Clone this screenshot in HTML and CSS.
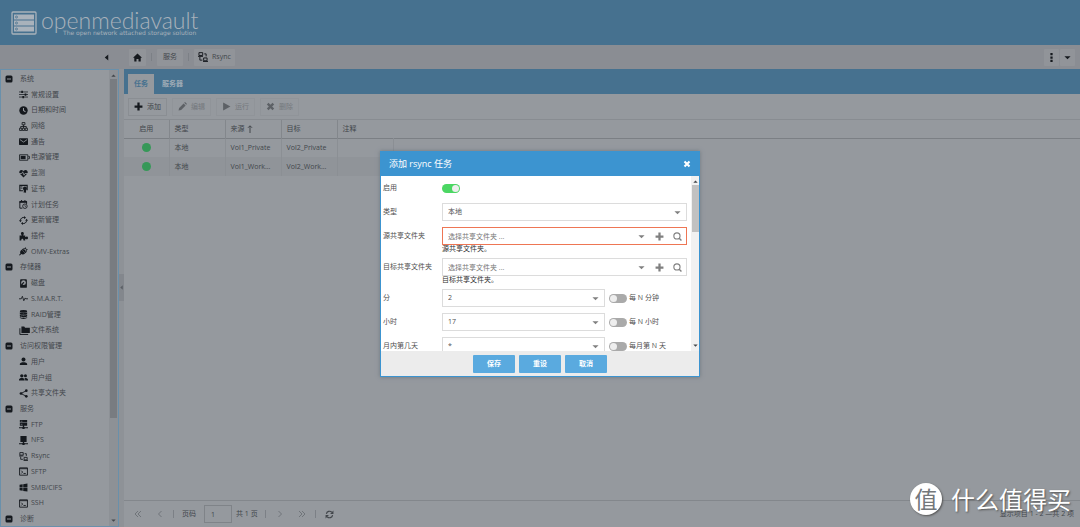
FILE: index.html
```
<!DOCTYPE html>
<html lang="zh-CN">
<head>
<meta charset="utf-8">
<title>openmediavault</title>
<link rel="stylesheet" href="styles.css">
</head>
<body>
<svg class="sprite" aria-hidden="true">
  <symbol id="minus-box" viewBox="0 0 16 16"><rect x="1" y="1" width="14" height="14" rx="3"/><path d="M4 8h8" stroke="#95999e" stroke-width="2"/></symbol>
  <symbol id="sliders" viewBox="0 0 16 16"><path d="M0 3.500h16M0 8h16M0 12.500h16" stroke="currentColor" stroke-width="1.300"/><path d="M4 1.500h3v4H4zM10 6h3v4h-3zM6 10.500h3v4H6z"/></symbol>
  <symbol id="clock" viewBox="0 0 16 16"><circle cx="8" cy="8" r="7.500"/><path d="M8 3.500V8l3.500 2.500" fill="none" stroke="#95999e" stroke-width="1.800"/></symbol>
  <symbol id="network" viewBox="0 0 16 16"><path d="M5.500 1h5v4h-5zM1 11h4v4H1zM6 11h4v4H6zM11 11h4v4h-4zM8 5v6M3 11V8h10v3" fill="none" stroke="currentColor" stroke-width="1.500"/></symbol>
  <symbol id="mail" viewBox="0 0 16 16"><rect y="2" width="16" height="12" rx="1"/><path d="M1.500 4.500 8 9l6.500-4.500" fill="none" stroke="#95999e" stroke-width="1.500"/></symbol>
  <symbol id="battery" viewBox="0 0 20 16"><path d="M1 3h15v10H1zM17 6h2v4h-2" fill="none" stroke="currentColor" stroke-width="1.500"/><path d="M3 5h9v6H3z"/></symbol>
  <symbol id="heart" viewBox="0 0 16 16"><path d="M8 15 1 8C-1 4 3-1 8 3.500 13-1 17 4 15 8z"/><path d="M0 8h5l1.500-3 2.500 6 1.500-3H16" fill="none" stroke="#95999e" stroke-width="1.400"/></symbol>
  <symbol id="cert" viewBox="0 0 16 16"><path d="M7 12H1.500V2.500h13V11" fill="none" stroke="currentColor" stroke-width="2"/><path d="M3 5h3M3 7.500h3" stroke="currentColor" stroke-width="1.300"/><circle cx="10.500" cy="8" r="3.500"/><path d="M8.500 10v6l2-1.500 2 1.500v-6z"/></symbol>
  <symbol id="schedule" viewBox="0 0 16 16"><path d="M6 14.500H1.500v-12h12V7M4.500 0v3M10.500 0v3" fill="none" stroke="currentColor" stroke-width="1.700"/><path d="M1 2h13v3H1z"/><circle cx="10.500" cy="11" r="4" fill="none" stroke="currentColor" stroke-width="1.500"/><path d="M10.500 8.500V11l2 1" fill="none" stroke="currentColor"/></symbol>
  <symbol id="refresh" viewBox="0 0 16 16"><path d="M2.500 7A5.500 5.500 0 0 1 12 4M13.500 9A5.500 5.500 0 0 1 4 12" fill="none" stroke="currentColor" stroke-width="2"/><path d="M15 1v6H9zM1 15V9h6z"/></symbol>
  <symbol id="sync" viewBox="0 0 16 16"><path d="M2.500 8A5.500 5.500 0 0 1 10 2.900M13.500 8A5.500 5.500 0 0 1 6 13.100" fill="none" stroke="currentColor" stroke-width="1.700"/><path d="M9 0v5.500l3.500-2.500zM7 16v-5.500L3.500 13zM0 7.500h5L2.500 11zM16 8.500h-5L13.500 5z"/></symbol>
  <symbol id="puzzle" viewBox="0 0 16 16"><path d="M1 6h4C2 2 4 0 6 0s4 2 1.500 6H11v3c3-2 5-1 5 1.500S14 14 11 12v3H8c0-4-4-4-4 0H1z"/></symbol>
  <symbol id="plug" viewBox="0 0 16 16"><path d="M5 5l6 6c-2 2.500-5 3-7 1.500L1.500 15 0 14l2.500-2.500C1.500 9 2 7 5 5z"/><path d="M5 4.500 11.500 11 14 8 8 2zM8 4l3.500-3.500L13 2 9.500 5.500zM10.500 6.500 14 3l1.500 1.500L12 8z"/></symbol>
  <symbol id="disk" viewBox="0 0 16 16"><path d="M3.500.5h9A1.500 1.500 0 0 1 14 2v12a1.500 1.500 0 0 1-1.500 1.500h-9A1.500 1.500 0 0 1 2 14V2A1.500 1.500 0 0 1 3.500.5z"/><circle cx="8" cy="6.500" r="4.300" fill="#95999e"/><circle cx="8" cy="6.500" r="1.300"/><path d="m7 7-3 6" stroke="currentColor" stroke-width="2"/></symbol>
  <symbol id="pulse" viewBox="0 0 16 16"><path d="M0 8.500h4L6 4l2.500 8L11 7l1 1.500h4" fill="none" stroke="currentColor" stroke-width="1.500"/></symbol>
  <symbol id="database" viewBox="0 0 16 16"><ellipse cx="8" cy="2.500" rx="6.500" ry="2.500"/><path d="M1.500 4c2 2.200 11 2.200 13 0v3c-2 2.200-11 2.200-13 0zM1.500 8.200c2 2.200 11 2.200 13 0v3c-2 2.200-11 2.200-13 0zM1.500 12.300c2 2.200 11 2.200 13 0v1.200c0 3.300-13 3.300-13 0z"/></symbol>
  <symbol id="folders" viewBox="0 0 19 16"><path d="M4 1h5l1.500 2H19v9.500H4z"/><path d="M1.300 4v11H16" fill="none" stroke="currentColor" stroke-width="1.700"/></symbol>
  <symbol id="user" viewBox="0 0 16 16"><circle cx="8" cy="4.500" r="3.500"/><path d="M1.500 14v-1.500c0-4.500 13-4.500 13 0V14z"/></symbol>
  <symbol id="users" viewBox="0 0 16 16"><circle cx="5" cy="5" r="3"/><circle cx="11.500" cy="5" r="2.700"/><path d="M0 13.500V12c0-4 10-4 10 0v1.500zM11 13.500V12c0-1.300-.6-2.200-1.500-3C12 8.500 16 9.500 16 12v1.500z"/></symbol>
  <symbol id="share" viewBox="0 0 16 16"><path d="M13 3 3.500 8l9.500 5" fill="none" stroke="currentColor" stroke-width="1.600"/><circle cx="13" cy="3" r="2.400"/><circle cx="3.500" cy="8" r="2.400"/><circle cx="13" cy="13" r="2.400"/></symbol>
  <symbol id="server" viewBox="0 0 16 16"><path d="M1.500 0h13v4.500h-13zM1.500 5.500h13V10h-13zM7 10h2v3H7zM0 13h16v1.500H0zM6 12h4v4H6z"/><path d="M3 2.200h3M3 7.700h3" stroke="#95999e"/></symbol>
  <symbol id="nfs" viewBox="0 0 16 16"><path d="M2.500 0h11v10.500h-11zM7 10h2v3H7zM0 13h16v1.500H0zM6 12h4v4H6z"/></symbol>
  <symbol id="rsync" viewBox="0 0 16 16"><path d="M1.500 1h6v4.500h-6zM9 9.500h5.500V14H9zM0 7h8M8 15.300h8M3 8v5h4M10 3h3v4" fill="none" stroke="currentColor" stroke-width="1.500"/></symbol>
  <symbol id="terminal" viewBox="0 0 16 16"><path d="M1 1.500h14v13H1zM1 3h14M4 6.500 6.500 9 4 11.500M8 11.500h4" fill="none" stroke="currentColor" stroke-width="1.600"/></symbol>
  <symbol id="windows" viewBox="0 0 16 16"><path d="M1 3l5.500-.8v5.300H1zM7.500 2 15 1v6.500H7.500zM1 8.500h5.500v5.300L1 13zM7.500 8.500H15V15l-7.500-1z"/></symbol>
  <symbol id="home" viewBox="0 0 16 16"><path d="M8 1 16 8.500h-2.300V15H9.800v-4.500H6.200V15H2.300V8.500H0z"/></symbol>
  <symbol id="plus" viewBox="0 0 16 16"><path d="M6 1h4v5h5v4h-5v5H6v-5H1V6h5z"/></symbol>
  <symbol id="pencil" viewBox="0 0 16 16"><path d="M1 15l1-4.500 8-8L13.500 6l-8 8zM11 1.500 12.500 0 16 3.500 14.500 5z"/></symbol>
  <symbol id="play" viewBox="0 0 16 16"><path d="M2 1 15 8 2 15z"/></symbol>
  <symbol id="cross" viewBox="0 0 16 16"><path d="m3 3 10 10M13 3 3 13" stroke="currentColor" stroke-width="4.200"/></symbol>
  <symbol id="search" viewBox="0 0 16 16"><circle cx="7" cy="7" r="5.500" fill="none" stroke="currentColor" stroke-width="2"/><path d="m11 11 4 4" stroke="currentColor" stroke-width="2.500"/></symbol>
  <symbol id="down" viewBox="0 0 16 16"><path d="M1 5h14l-7 7z"/></symbol>
  <symbol id="up" viewBox="0 0 16 16"><path d="M1 12h14L8 5z"/></symbol>
  <symbol id="left" viewBox="0 0 16 16"><path d="M12 1v14L4 8z"/></symbol>
  <symbol id="dots" viewBox="0 0 16 16"><path d="M6 0h4v4H6zM6 6h4v4H6zM6 12h4v4H6z"/></symbol>
  <symbol id="prev" viewBox="0 0 16 16"><path d="m11 2-6 6 6 6" fill="none" stroke="currentColor" stroke-width="1.800"/></symbol>
  <symbol id="next" viewBox="0 0 16 16"><path d="m5 2 6 6-6 6" fill="none" stroke="currentColor" stroke-width="1.800"/></symbol>
  <symbol id="first" viewBox="0 0 16 16"><path d="M8 2 2 8l6 6M14 2 8 8l6 6" fill="none" stroke="currentColor" stroke-width="1.800"/></symbol>
  <symbol id="last" viewBox="0 0 16 16"><path d="m2 2 6 6-6 6M8 2l6 6-6 6" fill="none" stroke="currentColor" stroke-width="1.800"/></symbol>
  <symbol id="sort" viewBox="0 0 16 16"><path d="M8 16V2M4 5.500 8 1.500l4 4" fill="none" stroke="currentColor" stroke-width="2"/></symbol>
</svg>

<div class="app">
  <header class="brand">
    <svg class="brand-mark" viewBox="0 0 26 24" aria-hidden="true"><rect x="1" y="1" width="24" height="22" rx="1" fill="none" stroke="#a9b2bb" stroke-width="1.300"/><path d="M3 3.500h20v5H3zM3 9.500h20v5H3zM3 15.500h20v5H3z" fill="#a9b2bb"/><g fill="none" stroke="#46718f" stroke-width=".8"><circle cx="5.500" cy="6" r="1"/><circle cx="5.500" cy="12" r="1"/><circle cx="5.500" cy="18" r="1"/></g></svg>
    <div class="brand-text"><span class="brand-name">openmediavault</span><span class="brand-tag">The open network attached storage solution</span></div>
  </header>

  <div class="topbar">
    <button class="collapse" aria-label="折叠"><svg class="icon tiny"><use href="#left"/></svg></button>
    <nav class="crumbs" aria-label="路径">
      <button class="chip" aria-label="主页"><svg class="icon"><use href="#home"/></svg></button><i></i>
      <button class="chip">服务</button><i></i>
      <button class="chip"><svg class="icon big"><use href="#rsync"/></svg>Rsync</button>
    </nav>
    <div class="menu-buttons"><button class="chip" aria-label="菜单"><svg class="icon"><use href="#dots"/></svg></button><button class="chip" aria-label="更多"><svg class="icon tiny"><use href="#down"/></svg></button></div>
  </div>

  <div class="content">
    <aside class="sidebar">
      <nav class="tree">
        <a class="group" href="#"><svg class="icon"><use href="#minus-box"/></svg>系统</a>
        <a href="#"><svg class="icon"><use href="#sliders"/></svg>常规设置</a>
        <a href="#"><svg class="icon"><use href="#clock"/></svg>日期和时间</a>
        <a href="#"><svg class="icon"><use href="#network"/></svg>网络</a>
        <a href="#"><svg class="icon"><use href="#mail"/></svg>通告</a>
        <a href="#"><svg class="icon wide"><use href="#battery"/></svg>电源管理</a>
        <a href="#"><svg class="icon"><use href="#heart"/></svg>监测</a>
        <a href="#"><svg class="icon"><use href="#cert"/></svg>证书</a>
        <a href="#"><svg class="icon"><use href="#schedule"/></svg>计划任务</a>
        <a href="#"><svg class="icon"><use href="#sync"/></svg>更新管理</a>
        <a href="#"><svg class="icon"><use href="#puzzle"/></svg>插件</a>
        <a href="#"><svg class="icon"><use href="#plug"/></svg>OMV-Extras</a>
        <a class="group" href="#"><svg class="icon"><use href="#minus-box"/></svg>存储器</a>
        <a href="#"><svg class="icon"><use href="#disk"/></svg>磁盘</a>
        <a href="#"><svg class="icon"><use href="#pulse"/></svg>S.M.A.R.T.</a>
        <a href="#"><svg class="icon"><use href="#database"/></svg>RAID管理</a>
        <a href="#"><svg class="icon wide"><use href="#folders"/></svg>文件系统</a>
        <a class="group" href="#"><svg class="icon"><use href="#minus-box"/></svg>访问权限管理</a>
        <a href="#"><svg class="icon"><use href="#user"/></svg>用户</a>
        <a href="#"><svg class="icon"><use href="#users"/></svg>用户组</a>
        <a href="#"><svg class="icon"><use href="#share"/></svg>共享文件夹</a>
        <a class="group" href="#"><svg class="icon"><use href="#minus-box"/></svg>服务</a>
        <a href="#"><svg class="icon"><use href="#server"/></svg>FTP</a>
        <a href="#"><svg class="icon"><use href="#nfs"/></svg>NFS</a>
        <a href="#"><svg class="icon"><use href="#rsync"/></svg>Rsync</a>
        <a href="#"><svg class="icon"><use href="#terminal"/></svg>SFTP</a>
        <a href="#"><svg class="icon"><use href="#windows"/></svg>SMB/CIFS</a>
        <a href="#"><svg class="icon"><use href="#terminal"/></svg>SSH</a>
        <a class="group" href="#"><svg class="icon"><use href="#minus-box"/></svg>诊断</a>
      </nav>
      <div class="scroll"><svg><use href="#up"/></svg><span class="thumb"></span><svg><use href="#down"/></svg></div>
    </aside>
    <div class="splitter"><button aria-label="收起侧栏"><svg class="icon tiny"><use href="#left"/></svg></button></div>

    <main class="panel">
      <div class="tabs" role="tablist"><button class="tab active" role="tab" aria-selected="true">任务</button><button class="tab" role="tab">服务器</button></div>
      <div class="tools">
        <button class="tool on"><svg class="icon"><use href="#plus"/></svg>添加</button>
        <button class="tool" disabled><svg class="icon"><use href="#pencil"/></svg>编辑</button>
        <button class="tool" disabled><svg class="icon"><use href="#play"/></svg>运行</button>
        <button class="tool" disabled><svg class="icon"><use href="#cross"/></svg>删除</button>
      </div>
      <div class="grid">
        <table>
          <thead><tr><th>启用</th><th>类型</th><th>来源 <svg class="icon sort"><use href="#sort"/></svg></th><th>目标</th><th>注释</th><th></th></tr></thead>
          <tbody>
            <tr><td><span class="dot"></span></td><td>本地</td><td>Vol1_Private</td><td>Vol2_Private</td><td></td><td></td></tr>
            <tr><td><span class="dot"></span></td><td>本地</td><td>Vol1_Work...</td><td>Vol2_Work...</td><td></td><td></td></tr>
          </tbody>
        </table>
      </div>
      <footer class="pager">
        <button aria-label="首页"><svg class="icon"><use href="#first"/></svg></button>
        <button aria-label="上一页"><svg class="icon"><use href="#prev"/></svg></button><i></i>
        <label for="page">页码</label><input id="page" value="1"><span>共 1 页</span><i></i>
        <button aria-label="下一页"><svg class="icon"><use href="#next"/></svg></button>
        <button aria-label="末页"><svg class="icon"><use href="#last"/></svg></button><i></i>
        <button class="reload" aria-label="刷新"><svg class="icon"><use href="#refresh"/></svg></button>
        <span class="status">显示项目 1 - 2 —共 2 项</span>
      </footer>
    </main>
  </div>
</div>

<div class="dialog" role="dialog" aria-labelledby="dlg-title">
  <div class="dialog-head"><h2 id="dlg-title">添加 rsync 任务</h2><button aria-label="关闭"><svg class="icon"><use href="#cross"/></svg></button></div>
  <div class="dialog-body">
    <form class="form">
      <div class="row"><label for="enable">启用</label><div class="line"><input class="switch" type="checkbox" id="enable" checked></div></div>
      <div class="row"><label for="type">类型</label><div class="box"><select id="type"><option>本地</option></select><svg class="icon arrow"><use href="#down"/></svg></div></div>
      <div class="row hinted"><label for="src">源共享文件夹</label><div class="box invalid"><input id="src" placeholder="选择共享文件夹 ..."><button type="button" aria-label="展开"><svg class="icon tiny"><use href="#down"/></svg></button><button type="button" aria-label="新建"><svg class="icon"><use href="#plus"/></svg></button><button type="button" aria-label="搜索"><svg class="icon"><use href="#search"/></svg></button></div><small>源共享文件夹。</small></div>
      <div class="row hinted"><label for="dst">目标共享文件夹</label><div class="box"><input id="dst" placeholder="选择共享文件夹 ..."><button type="button" aria-label="展开"><svg class="icon tiny"><use href="#down"/></svg></button><button type="button" aria-label="新建"><svg class="icon"><use href="#plus"/></svg></button><button type="button" aria-label="搜索"><svg class="icon"><use href="#search"/></svg></button></div><small>目标共享文件夹。</small></div>
      <div class="row"><label for="min">分</label><div class="line"><div class="box"><select id="min"><option>2</option></select><svg class="icon arrow"><use href="#down"/></svg></div><label class="every"><input class="switch" type="checkbox">每 N 分钟</label></div></div>
      <div class="row"><label for="hour">小时</label><div class="line"><div class="box"><select id="hour"><option>17</option></select><svg class="icon arrow"><use href="#down"/></svg></div><label class="every"><input class="switch" type="checkbox">每 N 小时</label></div></div>
      <div class="row"><label for="day">月内第几天</label><div class="line"><div class="box"><select id="day"><option>*</option></select><svg class="icon arrow"><use href="#down"/></svg></div><label class="every"><input class="switch" type="checkbox">每月第 N 天</label></div></div>
    </form>
    <div class="scroll"><svg><use href="#up"/></svg><span class="thumb"></span><svg><use href="#down"/></svg></div>
  </div>
  <div class="dialog-foot"><button>保存</button><button>重设</button><button>取消</button></div>
</div>

<div class="watermark"><span class="seal">值</span><span>什么值得买</span></div>
</body>
</html>
```
FILE: styles.css
```
* { box-sizing: border-box; }
body {
  margin: 0;
  font: 7px/10px "Open Sans", "Noto Sans CJK SC", sans-serif;
  color: #42464b;
  background: #95999e;
  overflow: hidden;
}
button, input, select { font: inherit; color: inherit; border: 0; padding: 0; margin: 0; background: none; outline: 0; }
button { display: flex; align-items: center; justify-content: center; }
a { color: inherit; text-decoration: none; }
.sprite { position: absolute; width: 0; height: 0; }
.icon { width: 9px; height: 9px; fill: currentColor; color: #15191e; flex: none; }
.icon.tiny { width: 7px; height: 7px; }
.icon.big { width: 10px; height: 10px; }

.app { display: flex; flex-direction: column; height: 100vh; }
.brand { display: flex; align-items: center; gap: 4px; height: 45px; padding: 0 11px; background: #46718f; color: #a9b2bb; flex: none; }
.brand-mark { width: 26px; height: 24px; }
.brand-text { display: flex; flex-direction: column; }
.brand-name { font: 300 23px/20px Lato, sans-serif; }
.brand-tag { font: 6px/6px "DejaVu Sans", sans-serif; padding-left: 22px; }

.topbar { display: flex; align-items: center; height: 24px; background: #8a8d93; flex: none; }
.collapse { width: 24px; height: 16px; margin-left: 94px; }
.crumbs { display: flex; align-items: center; gap: 5px; margin-left: 11px; }
.crumbs i, .pager i { width: 1px; height: 8px; background: #7c8086; }
.chip { height: 17px; gap: 4px; background: #919499; border-radius: 1px; }
.crumbs .chip { padding: 0 4px; }
.crumbs .chip:nth-of-type(2) { padding: 0 6px; }
.menu-buttons { display: flex; gap: 1px; margin-left: auto; padding-right: 5px; }
.menu-buttons .chip { width: 15px; }

.content { display: flex; flex: 1; min-height: 0; }
.sidebar { display: flex; width: 119px; border: 1px solid #6990ab; flex: none; }
.tree { display: flex; flex-direction: column; flex: 1; min-width: 0; padding-top: 1px; margin-bottom: -1px; }
.tree a { display: flex; flex: 1; align-items: center; gap: 3px; padding-left: 18px; white-space: nowrap; min-height: 0; }
.tree .group { gap: 7px; padding-left: 4px; }
.tree .group .icon { width: 8px; height: 8px; }
.tree .icon.wide { width: 11px; margin-right: -2px; }
.scroll { display: flex; flex-direction: column; align-items: center; width: 9px; padding: 2px 1px; background: #8d9196; flex: none; }
.scroll svg { width: 5px; height: 7px; fill: #42464b; flex: none; }
.thumb { width: 7px; background: #787c81; }
.sidebar .thumb { height: 75%; }
.scroll svg:last-child { margin-top: auto; }
.splitter { display: flex; align-items: center; width: 5px; background: #8e9297; flex: none; }
.splitter button { width: 5px; height: 27px; background: #83878d; margin-top: -22px; }
.splitter .icon { width: 5px; color: #5a5e64; }

.panel { display: flex; flex-direction: column; flex: 1; min-width: 0; }
.tabs { display: flex; align-items: flex-end; height: 25px; padding-left: 4px; background: #46718f; flex: none; }
.tab { height: 20px; padding: 0 6px; color: #9fabb6; font-weight: 600; }
.tab + .tab { padding: 0 8px; }
.tab.active { background: #95999e; color: #46718f; }
.tools { display: flex; align-items: center; gap: 5px; height: 25px; padding-left: 4px; flex: none; }
.tool { width: 39px; height: 18px; gap: 4px; border: 1px solid #909499; color: #74787d; }
.tool .icon { color: #5d6166; }
.tool.on { color: #42464b; border-color: #8a8e93; }
.tool.on .icon { color: #15191e; }
.grid { flex: 1; border-top: 1px solid #888c91; }
table { width: 100%; border-collapse: collapse; table-layout: fixed; }
th, td { width: 56px; height: 19px; padding: 0 5px; text-align: left; font-weight: 400; border-right: 1px solid #8b8f94; white-space: nowrap; }
th { height: 18px; border-right-color: #83878c; }
th:last-child, td:last-child { width: auto; border-right: 0; }
th:first-child, td:first-child { width: 45px; text-align: center; }
thead tr { border-bottom: 1px solid #7b7f84; }
th:nth-child(5) { border-right: 0; }
tbody tr:nth-child(2) td:not(:last-child) { background: #909499; }
.icon.sort { width: 8px; height: 8px; vertical-align: middle; color: #42464b; }
.dot { display: block; width: 9px; height: 9px; margin: 0 auto; border-radius: 50%; background: #369858; }

.pager { display: flex; align-items: center; height: 27px; padding: 0 6px 0 8px; border-top: 1px solid #83878c; flex: none; }
.pager button { width: 12px; height: 16px; margin-right: 10px; }
.pager .icon { color: #6b6f75; width: 8px; height: 8px; }
.pager i { margin: 0 8px 0 -3px; }
.pager input { width: 28px; height: 18px; padding: 0 6px; margin: 0 4px 0 8px; border: 1px solid #7f8388; }
.pager span + i { margin-left: 7px; }
.pager .reload .icon { color: #42464b; width: 9px; height: 9px; }
.status { margin-left: auto; }

.dialog {
  position: absolute; left: 50%; top: 151px; width: 320px; margin-left: -160px;
  display: flex; flex-direction: column;
  background: #fff; border: 1px solid #3c94d0; color: #505050;
  box-shadow: 0 0 4px #6f7982;
}
.dialog .icon { color: #808080; }
.dialog-head { display: flex; align-items: center; justify-content: space-between; height: 24px; padding: 0 8px; background: #3c94d0; color: #fff; }
.dialog-head h2 { margin: 0; font-size: 9px; font-weight: 400; }
.dialog-head .icon { color: #fff; width: 8px; height: 8px; }
.dialog-body { display: flex; height: 175px; overflow: hidden; }
.form { flex: 1; padding: 3px 4px 0 2px; }
.row { display: grid; grid-template-columns: 59px 1fr; align-items: center; min-height: 18px; margin-bottom: 6px; }
.row.hinted { margin-bottom: 5px; }
.row small { grid-column: 2; font-size: 7px; line-height: 8px; color: #303030; }
.line { display: flex; align-items: center; gap: 4px; }
.box { position: relative; display: flex; align-items: center; flex: 1; height: 18px; border: 1px solid #dcdcdc; padding-right: 4px; }
.box.invalid { border-color: #ee7654; }
.box select, .box input { appearance: none; flex: 1; min-width: 0; height: 16px; padding-left: 5px; }
.box input::placeholder { color: #777; }
.box .arrow { position: absolute; right: 5px; width: 7px; height: 7px; pointer-events: none; }
.box button { width: 10px; margin-left: 8px; height: 16px; }
.every { display: flex; align-items: center; gap: 2px; width: 78px; }
.switch { appearance: none; width: 18px; height: 9px; border-radius: 5px; background: #aaa; flex: none; }
.switch::before { content: ""; display: block; width: 7px; height: 7px; margin: 1px; border-radius: 50%; background: #eee; }
.switch:checked { background: #4bd763; }
.switch:checked::before { margin-left: 10px; }
.dialog .scroll { width: 8px; background: #f1f1f1; }
.dialog .thumb { height: 47px; background: #c1c1c1; }
.dialog-foot { display: flex; justify-content: center; align-items: center; gap: 4px; height: 25px; background: #ececec; }
.dialog-foot button { width: 42px; height: 18px; border-radius: 1px; background: #5aaadf; color: #fff; font-weight: 600; }

.watermark {
  position: absolute; right: 9px; bottom: 11px;
  display: flex; align-items: center; gap: 9px;
  font: 400 24px/34px "Noto Sans CJK SC", sans-serif; color: #fff;
  text-shadow: 1px 1px 2px #555; white-space: nowrap; pointer-events: none;
}
.seal { width: 32px; height: 32px; border-radius: 50%; background: #fff; color: #73777b; font-size: 23px; line-height: 31px; text-align: center; text-shadow: none; box-shadow: 1px 1px 2px #555; }
```
